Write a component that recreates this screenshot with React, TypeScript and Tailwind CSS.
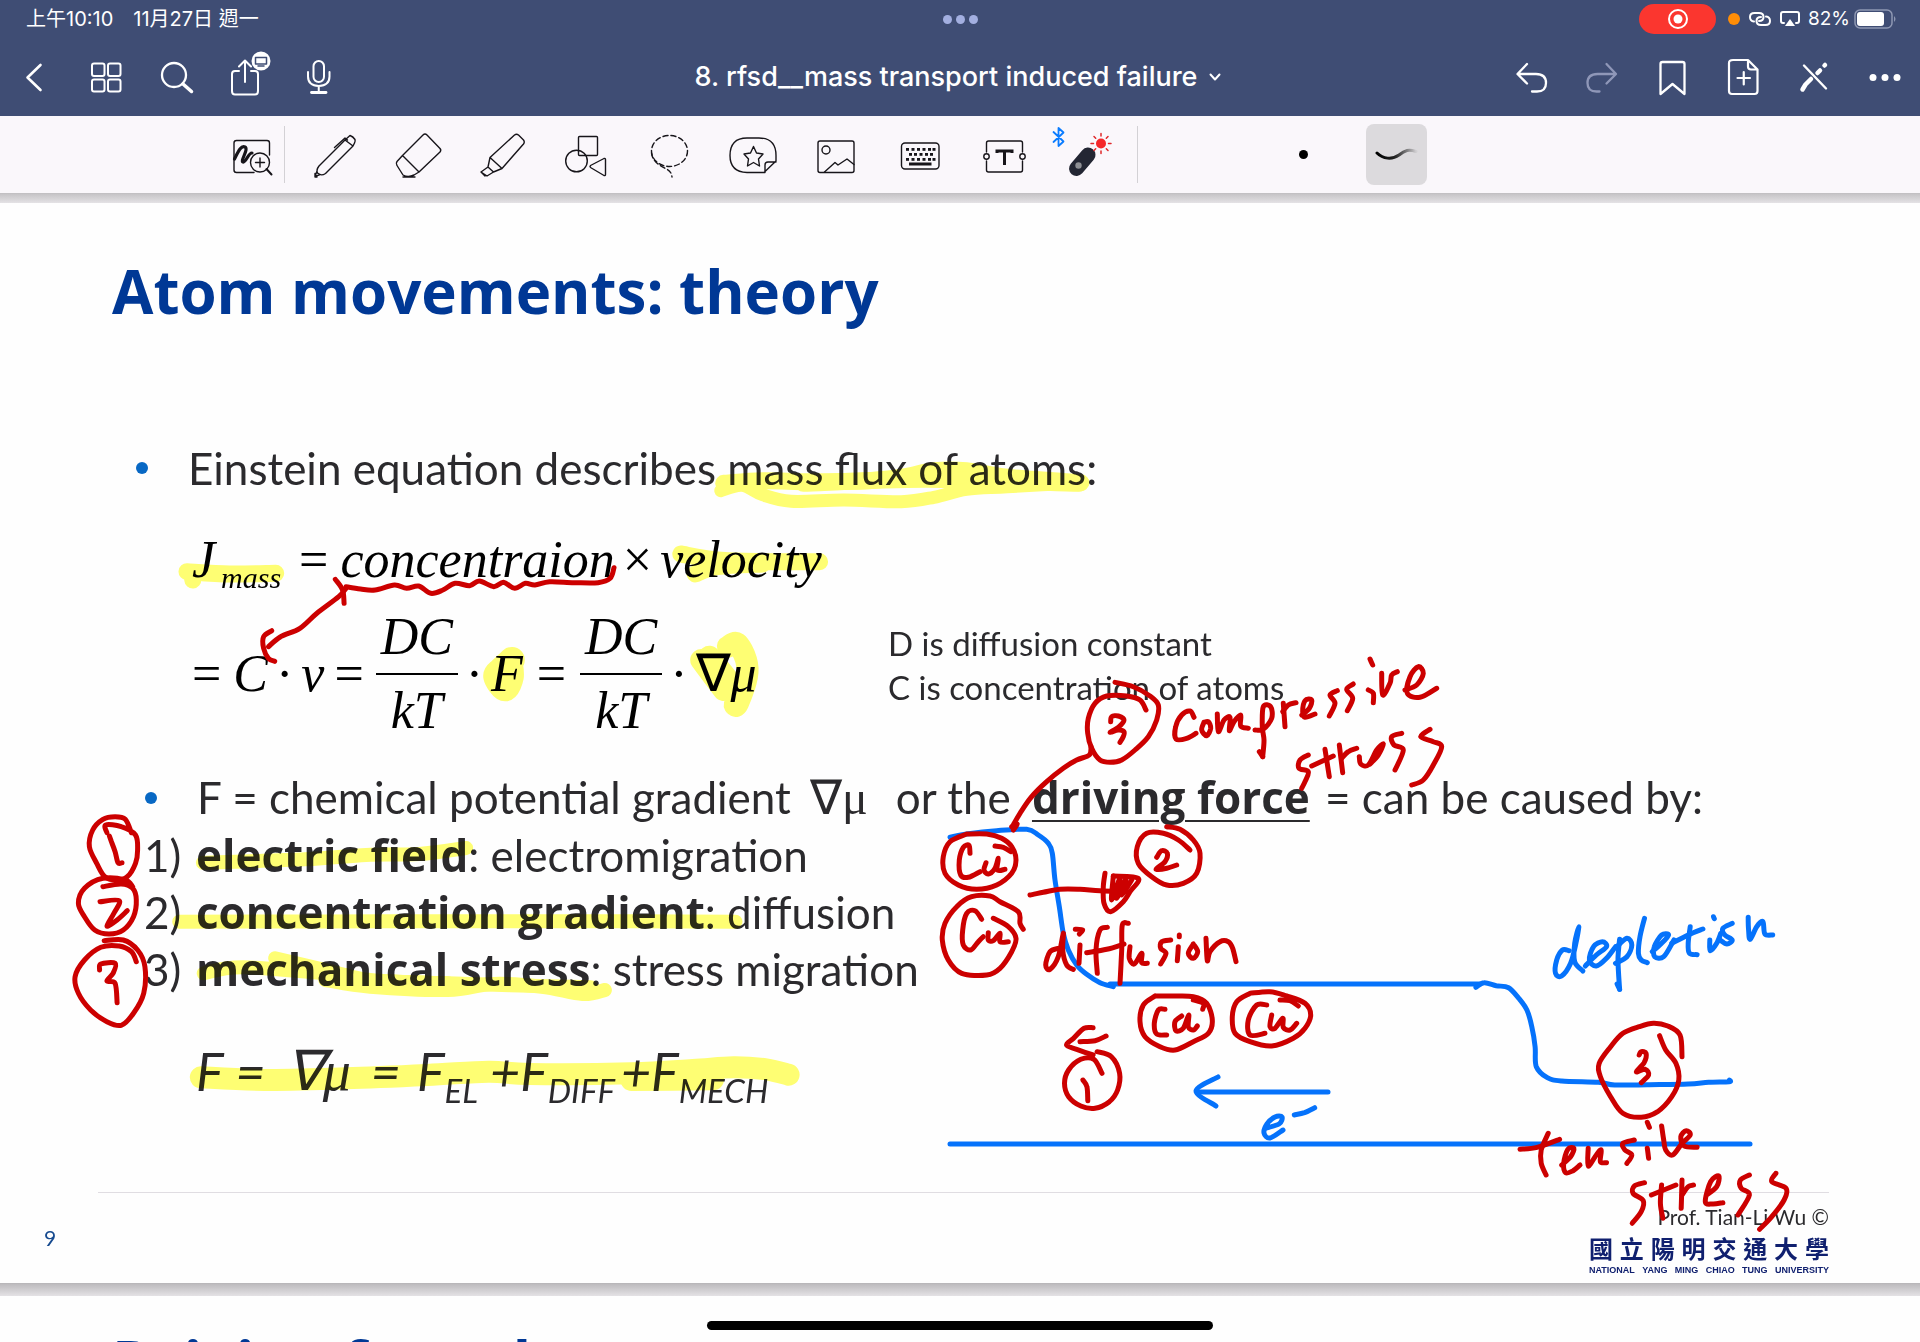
import React from "react";

/* ---------- ink helpers ---------- */

type Frame = { x: number; y: number; sx: number; sy: number };

// Turns "x,y x,y ..." samples into a smooth Catmull-Rom curve in slide units.
function smooth(samples: string, f: Frame): string {
  const p = samples.split(" ").map((s) => {
    const [a, b] = s.split(",").map(Number);
    return [f.x + a / f.sx, f.y + b / f.sy];
  });
  const r = (n: number) => n.toFixed(1);
  let d = `M${r(p[0][0])} ${r(p[0][1])}`;
  for (let i = 0; i < p.length - 1; i++) {
    const a = p[i - 1] ?? p[i];
    const b = p[i];
    const c = p[i + 1];
    const e = p[i + 2] ?? c;
    d += `C${r(b[0] + (c[0] - a[0]) / 6)} ${r(b[1] + (c[1] - a[1]) / 6)} ${r(c[0] - (e[0] - b[0]) / 6)} ${r(c[1] - (e[1] - b[1]) / 6)} ${r(c[0])} ${r(c[1])}`;
  }
  return d;
}

function Ink({ frame, strokes, color, width }: { frame: Frame; strokes: string[]; color: string; width: number }) {
  return (
    <g fill="none" stroke={color} strokeWidth={width} strokeLinecap="round" strokeLinejoin="round">
      {strokes.map((s, i) => (
        <path key={i} d={smooth(s, frame)} />
      ))}
    </g>
  );
}

const RED = "#cc0000";
const BLUE = "#0572fb";
const MARK = "#ffff73";

const PAGE: Frame = { x: 0, y: 0, sx: 1, sy: 1 };
const MIDDLE: Frame = { x: 900, y: 640, sx: 3, sy: 3 };
const UPPER: Frame = { x: 1000, y: 640, sx: 3, sy: 3 };
const LOWER: Frame = { x: 640, y: 780, sx: 2.45, sy: 3 };
const RIGHT: Frame = { x: 1280, y: 780, sx: 2.45, sy: 3 };
const LEFT: Frame = { x: 60, y: 780, sx: 2.45, sy: 3 };
const FORMULA: Frame = { x: 60, y: 520, sx: 2.063, sy: 3 };
const FLUX: Frame = { x: 640, y: 420, sx: 2.45, sy: 3 };

function Highlights() {
  return (
    <svg className="pointer-events-none absolute inset-0 h-full w-full mix-blend-multiply" viewBox="0 203 1920 1080" preserveAspectRatio="xMinYMin" aria-hidden="true">
      <Ink frame={FLUX} color={MARK} width={17} strokes={["205,190 300,182 420,185 560,182 650,170 720,152 800,152 900,172 1080,188", "400,190 700,178 1075,190", "135,462 190,440 300,432", "100,402 190,420 300,425 440,425"]} />
      <Ink frame={FLUX} color={MARK} width={13} strokes={["198,212 250,196 300,224 370,244 500,240 640,245 720,232 800,208 900,200 1085,188"]} />
      <Ink frame={FORMULA} color={MARK} width={17} strokes={["262,155 350,162 445,160", "273,160 274,180"]} />
      <Ink frame={FORMULA} color={MARK} width={26} strokes={["932,420 910,450 900,470 918,505 930,470 928,430"]} />
      <Ink frame={FLUX} color={MARK} width={22} strokes={["150,720 165,745 205,810", "170,710 210,770", "215,680 238,670 260,720 262,770 240,850 232,855"]} />
      <Ink frame={LEFT} color={MARK} width={14} strokes={["350,248 600,238 750,225 880,222 995,204", "292,425 800,424 1400,424 1655,425", "527,535 650,570 760,600 950,610", "352,580 450,562 700,585", "650,600 760,620 950,630 1060,612 1180,620 1280,642 1335,630", "700,600 950,610 1300,622"]} />
      <Ink frame={LEFT} color={MARK} width={22} strokes={["345,892 500,900 700,895 900,885 1050,875 1150,882 1400,880 1550,870 1650,862 1730,868 1785,884", "1400,900 1600,898"]} />
    </svg>
  );
}

function Annotations() {
  return (
    <svg className="pointer-events-none absolute inset-0 h-full w-full" viewBox="0 203 1920 1080" preserveAspectRatio="xMinYMin" role="img" aria-label="Pen annotations: compressive stress, diffusion, depletion, tensile stress, Cu atoms and electron flow">
      <Ink frame={MIDDLE} color={BLUE} width={5} strokes={["150,592 200,582 290,572 380,568 415,585 445,610 457,640 465,720 478,800 490,880 505,930 530,975 560,1003 600,1028 640,1040"]} />
      <Ink frame={PAGE} color={BLUE} width={5} strokes={["1110,984 1480,984", "950,1144 1750,1144", "1198,1092 1328,1092", "1218,1077 1196,1091 1216,1106", "1266,1128 1279,1124 1282,1117 1275,1117 1267,1124 1264,1133 1270,1138 1283,1130"]} />
      <Ink frame={RIGHT} color={BLUE} width={5} strokes={["480,622 500,608 530,617 560,623 585,655 605,690 617,740 625,800 628,860 655,893 690,903 780,907 820,915 900,914 1000,912 1050,907 1100,905 1101,900", "35,1005 60,998 85,983"]} />
      <Ink frame={RIGHT} color={BLUE} width={5} strokes={["708,512 692,510 678,540 675,580 690,588 712,550 725,490 732,440 722,490 722,545 742,573", "748,558 775,525 800,500 790,485 768,500 758,540 775,558 800,535 822,500", "832,478 828,540 832,628", "826,612 832,628", "825,500 850,475 862,495 850,530 822,550", "893,415 882,470 878,520 885,540 900,548", "912,515 935,490 952,465 935,465 917,500 918,530 940,530 965,480", "1005,440 1000,490 1003,520 1022,524", "960,490 1000,465 1036,447", "1053,480 1054,512 1070,490 1080,460", "1062,410 1064,416", "1108,430 1085,445 1090,465 1108,480 1095,492 1078,480", "1147,412 1148,450 1152,478 1168,440 1183,425 1188,462 1207,465"]} />

      <Ink frame={FORMULA} color={RED} width={5} strokes={["1143,143 1135,175 1110,188 1060,188 1010,185 980,195 960,190 938,205 915,187 895,200 865,183 845,197 815,190 790,210 765,220 740,198 715,205 690,195 650,210 620,207 590,200", "568,178 583,210 586,250", "590,205 575,230 530,280 495,325 455,350 430,380", "437,332 420,350 420,385 430,415 443,424"]} />

      <Ink frame={LEFT} color={RED} width={5} strokes={["115,158 112,135 150,140 185,165 190,210 185,250 165,290 140,300 110,290 90,250 72,200 80,150 105,118 135,110 160,118 175,158", "121,168 126,185 135,215 142,248 152,248", "105,320 150,312 178,325 187,360 180,410 155,450 120,462 85,450 60,410 45,370 60,325 105,295 160,300 178,320", "98,365 145,362 132,400 115,438 140,420 165,392", "108,482 155,480 190,510 208,560 205,640 180,700 150,736 115,725 75,690 45,640 37,590 60,540 100,502 145,498 175,515 187,545", "97,570 100,552 135,550 130,580 115,603 135,610 140,668"]} />

      <Ink frame={MIDDLE} color={RED} width={5} strokes={["645,127 700,140 750,168 775,195 770,240 745,290 705,330 665,360 630,367 600,360 575,325 563,280 565,235 585,190 620,168 680,168 720,180 738,210", "632,245 635,230 655,228 672,240 655,262 630,277 655,270 672,275 670,290 660,307", "573,320 568,345 530,360 490,385 440,425 395,470 360,520 340,555", "335,560 352,552 340,570", "200,582 150,605 130,650 135,700 175,735 230,748 290,735 335,700 348,660 335,620 305,595 260,582 200,582", "285,618 310,622 333,635", "210,640 207,616 190,622 178,660 182,705 205,712 240,695", "258,668 252,690 265,702 285,685 295,655 292,690 315,688", "370,868 360,850 355,815 300,785 270,768 215,770 170,800 135,850 127,900 145,960 185,1000 260,1005 300,985 335,935 348,895 325,860 280,835", "245,838 225,812 200,820 188,870 190,915 212,930 235,905 250,890", "265,878 265,900 280,902 300,880 300,905 325,905", "390,765 430,757 480,748 540,748 600,752 680,755", "615,700 610,740 612,790 632,815 670,785 690,755 715,715 640,708", "640,708 635,780 660,712 650,775 678,715 665,765 695,720 672,755", "800,560 840,568 880,600 900,640 890,700 850,730 800,735 755,710 715,670 712,620 740,580 790,580 835,600 870,630", "770,652 785,632 802,640 795,665 768,688 800,685 830,675"]} />
      <Ink frame={MIDDLE} color={RED} width={5} strokes={["475,925 450,935 437,975 450,988 475,950 490,880 488,930 500,975 520,988", "540,915 537,970", "526,868 548,870 538,882", "622,862 600,870 588,930 592,1000", "560,938 620,928 672,912", "685,850 667,855 665,930 660,1030", "690,920 688,955 703,972 725,940 725,968 742,970", "812,900 785,905 782,925 798,940 782,972", "835,920 832,962", "838,885 838,890", "880,912 865,940 880,955 893,935 880,912", "918,895 922,962 930,935 960,905 985,905 998,925 1008,965", "765,1068 730,1095 720,1145 735,1190 780,1220 825,1230 880,1205 925,1180 937,1140 920,1090 880,1070 820,1068 765,1068", "880,1080 910,1090 908,1108", "795,1108 775,1110 763,1150 770,1182 800,1185", "845,1128 825,1145 828,1172 850,1165 866,1125 865,1160 880,1170 892,1158", "1050,1060 1010,1085 997,1130 1005,1180 1050,1205 1115,1218 1180,1195 1215,1165 1232,1125 1215,1090 1160,1068 1110,1055 1050,1060", "1140,1080 1170,1082 1195,1098", "1100,1095 1070,1095 1045,1140 1050,1185 1095,1180", "1115,1125 1110,1160 1125,1165 1148,1135 1150,1162 1170,1170 1190,1150"]} />
      <Ink frame={LOWER} color={RED} width={5} strokes={["1110,743 1088,745 1062,775 1045,795 1070,808 1110,825", "1078,785 1115,782 1142,768", "1120,815 1155,830 1175,880 1170,930 1150,965 1115,985 1080,978 1050,950 1040,910 1050,870 1080,838 1112,838 1132,880", "1085,900 1095,920 1097,962"]} />
      <Ink frame={UPPER} color={RED} width={5} strokes={["582,232 570,213 545,225 527,260 528,297 560,295 588,280", "612,247 605,270 620,287 632,265 625,245 612,247", "652,222 655,275 672,240 690,232 688,272 702,245 722,225 722,258 745,265", "765,270 790,268 815,235 812,200 790,200 787,260 792,300 788,350", "778,335 788,350", "850,190 855,260", "848,215 865,195 888,188", "905,225 928,205 935,180 915,182 908,215 915,232 945,222", "1012,152 990,165 1005,190 988,228", "1060,132 1040,148 1058,175 1042,212", "1105,150 1120,160 1120,188", "1110,57 1118,75", "1145,100 1148,165 1170,130 1175,105 1192,95", "1215,150 1250,135 1270,100 1255,80 1230,110 1222,160 1260,172 1310,145", "925,345 900,360 897,385 925,395 915,425 905,445", "975,328 988,410", "935,378 1000,348", "1018,315 1028,398", "1025,355 1045,335 1070,325", "1078,350 1082,372 1105,375 1130,330 1150,312 1135,345 1110,372", "1205,280 1175,290 1182,315 1210,330 1185,390", "1290,268 1262,290 1300,305 1325,320 1300,375 1270,420 1235,435"]} />
      <Ink frame={RIGHT} color={RED} width={5} strokes={["930,767 945,810 970,850 977,900 960,950 925,995 885,1012 840,1000 810,950 785,890 782,850 810,800 840,760 880,740 915,730 950,738 980,765 985,830", "880,825 885,815 897,820 892,848 873,875 895,868 903,885 885,908", "588,1108 630,1102 685,1078", "657,1060 640,1110 640,1150 652,1185", "690,1155 712,1130 720,1105 705,1108 695,1150 700,1178 718,1172 735,1155", "755,1105 755,1158 775,1125 787,1110 785,1145 800,1148", "868,1080 840,1090 845,1110 862,1125 850,1150", "900,1105 903,1135", "900,1027 905,1042", "935,1038 940,1080 945,1110 962,1125 985,1090 1005,1065 995,1052 982,1070 990,1098 1022,1102", "893,1208 868,1218 865,1240 890,1262 885,1295 863,1330", "935,1215 932,1270 938,1315", "910,1245 970,1215", "985,1200 983,1285", "985,1245 1000,1220 1013,1215", "1045,1245 1070,1220 1075,1188 1055,1205 1042,1265 1060,1272 1085,1268", "1150,1185 1128,1200 1130,1225 1150,1245 1122,1305", "1215,1180 1205,1205 1240,1225 1235,1260 1205,1310 1175,1348"]} />
    </svg>
  );
}

/* ---------- toolbar drawings ---------- */

function Glyph({ children, sw = 2 }: { children: React.ReactNode; sw?: number }) {
  return (
    <svg className="h-12 w-12 overflow-visible" viewBox="0 0 48 48" fill="none" stroke="currentColor" strokeWidth={sw} strokeLinecap="round" strokeLinejoin="round" aria-hidden="true">
      {children}
    </svg>
  );
}

function ToolGlyph({ children }: { children: React.ReactNode }) {
  return (
    <svg className="h-14 w-12 overflow-visible" viewBox="0 0 48 56" fill="none" stroke="#17151a" strokeWidth={1.4} strokeLinecap="round" strokeLinejoin="round" aria-hidden="true">
      {children}
    </svg>
  );
}

const leftActions = [
  { label: "Back", icon: <Glyph sw={2.6}><path d="M28.500 12 15.500 24.500 28.500 37" /></Glyph> },
  {
    label: "Thumbnails",
    icon: <Glyph><rect x="9" y="10.500" width="12.500" height="12.500" rx="2" /><rect x="25" y="10.500" width="12.500" height="12.500" rx="2" /><rect x="9" y="26.500" width="12.500" height="12" rx="2" /><rect x="25" y="26.500" width="12.500" height="12" rx="2" /></Glyph>,
  },
  { label: "Search", icon: <Glyph sw={2.3}><circle cx="20" cy="22" r="12" /><path d="m29 31 8.500 7.500" strokeWidth="3.500" /></Glyph> },
  {
    label: "Share",
    icon: (
      <Glyph>
        <path d="M14 18h-4q-3 0-3 3v17q0 3.500 3 3.500h20q3 0 3-3.500V21q0-3-3-3h-4M20 29V8M14 13.500 20 7.500l6 6" />
        <circle cx="36" cy="8" r="9.500" fill="#fff" stroke="none" />
        <path d="M30.500 4.500h11V11h-11zM33 13h6" stroke="#3f4d74" strokeWidth="1.500" />
      </Glyph>
    ),
  },
  {
    label: "Record audio",
    icon: <Glyph><rect x="17.500" y="8" width="10.500" height="21" rx="5.250" /><path d="M12 19v4.500q0 9 10.750 9.500Q33.500 32.500 33.500 23.500V19M22.750 33v6" /><path d="M15.500 39.500H30" strokeWidth="2.800" /></Glyph>,
  },
];

const rightActions = [
  { label: "Undo", icon: <Glyph sw={2.3}><path d="M21 11 11.500 21 21 30.500M12 21h18q10 0 10 9 0 8.500-9 8.500h-5" /></Glyph> },
  { label: "Redo", faded: true, icon: <Glyph sw={2.3}><path d="m29.500 11 9.500 10-9.500 9.500M38.500 21h-18q-10 0-10 9 0 8.500 9 8.500h3" /></Glyph> },
  { label: "Bookmark", icon: <Glyph sw={2.3}><path d="M12.500 11q0-2 2-2h20q2 0 2 2v30L24.500 31l-12 10z" /></Glyph> },
  { label: "Add page", icon: <Glyph sw={2.2}><path d="M14 7h15l9.500 9.500V38q0 3-3 3H13q-3 0-3-3V10q0-3 4-3zM29 7v6.500q0 3 3 3h6.500M18.500 25H31M24.750 19v12.500" /></Glyph> },
  {
    label: "Read only",
    icon: <Glyph><path d="M14 12.500 36 35.500" strokeWidth="2.400" /><path d="m12.500 36.500 3-5L21 26" strokeWidth="4.500" /><path d="m27.500 20 2.500-2.500M34.500 12.500l.5-.5" strokeWidth="4.500" /></Glyph>,
  },
  { label: "More", icon: <Glyph><g fill="currentColor" stroke="none"><circle cx="12" cy="24.500" r="3.500" /><circle cx="24" cy="24.500" r="3.500" /><circle cx="36" cy="24.500" r="3.500" /></g></Glyph> },
];

const keyRows = [
  { y: 21, xs: [10, 15.5, 21, 26.5, 32, 36.5] },
  { y: 26, xs: [13, 18, 23.5, 29, 34] },
  { y: 31, xs: [10, 15.5, 21, 26.5, 32, 36.5] },
];

const tools = [
  { label: "Pen", icon: <ToolGlyph><path d="M34 13 8 39q-3 4-1.500 7 3.500 3.500 8 .5L42 19zM34 13l5-4.500q3 1 5 4 .5 2-.5 3.500L42 19M23.500 20.500 34 11l2.500 2M6 44l-2 5.500 5-2M4 46.500V50h2" /></ToolGlyph> },
  { label: "Eraser", icon: <ToolGlyph><path d="M29 8q2-2 4 0l13 13.500q1.500 1.500 0 3.500L25 45 8.500 28.500zM8.500 28.500 3 34.500q-1.500 2 0 4l6 9.500q5 3 11 0l5-3M9 50h12" /></ToolGlyph> },
  { label: "Highlighter", icon: <ToolGlyph><path d="M36.500 8q2-1.500 4 0l5 5q1.500 2 0 4L24 41.500 12 30.500zM12 30.500 10 40l5.500 5L24 41.500M10 40l-7 5 6 4 6.500-4M3 45l4 4" /></ToolGlyph> },
  { label: "Shapes", icon: <ToolGlyph><rect x="16.500" y="9.500" width="19" height="19" rx="1" /><circle cx="14.500" cy="34" r="10.800" /><path d="M28.500 38.500q-1 1 0 2L42 48.500q1.500.5 1.500-1v-15q0-1.500-1.500-1z" /></ToolGlyph> },
  { label: "Lasso", icon: <ToolGlyph><g strokeDasharray="5 3"><ellipse cx="24.500" cy="24" rx="18" ry="15.500" /><path d="M6.500 26c1 9 9 13 15 16 4 2 5 4.500 5.500 8" /></g></ToolGlyph> },
  { label: "Elements", icon: <ToolGlyph><path d="M35 45.500H18Q1 45 1 28.500 1 11 18 11h12q17 0 17 17.500V34zM47 35h-8q-3 0-3 3v7.500" /><path d="m24.500 19.500 3 6.500 6.500 1-4.500 5 1 7-6-3.500-6 3.500 1-7-4.500-5 6.500-1z" /></ToolGlyph> },
  { label: "Image", icon: <ToolGlyph><rect x="6" y="14" width="36" height="31.500" rx="2" /><circle cx="14" cy="23" r="4" /><path d="M12.500 45 23 35.500l3 2.500 9-6 7 5.500" /></ToolGlyph> },
  {
    label: "Keyboard",
    icon: (
      <ToolGlyph>
        <rect x="5.500" y="16" width="37.500" height="26" rx="3.500" />
        <g fill="#17151a" stroke="none">
          {keyRows.map((r) => r.xs.map((x) => <rect key={`${x}-${r.y}`} x={x} y={r.y} width="3" height="2.800" />))}
          <rect x="13" y="35.500" width="22.500" height="3" />
        </g>
      </ToolGlyph>
    ),
  },
  { label: "Text box", icon: <ToolGlyph><path d="M6.500 25v-9q0-2 2-2h32q2 0 2 2v9M6.500 34v9q0 2 2 2h32q2 0 2-2v-9" /><circle cx="6.500" cy="29.500" r="2.700" /><circle cx="42.500" cy="29.500" r="2.700" /><path d="M17 26v-2h15v2M24.500 24v14" strokeWidth="3" strokeLinecap="butt" strokeLinejoin="miter" /></ToolGlyph> },
  {
    label: "Laser pointer",
    icon: (
      <ToolGlyph>
        <path d="m-9.500 5 10 9.500-5 4.500V1l5 4.500-10 9.500" stroke="#0a7cff" strokeWidth="1.800" />
        <path d="M13.500 41.500 25 28" stroke="#232633" strokeWidth="15" />
        <circle cx="15.500" cy="38.500" r="3.200" fill="#8d8f94" stroke="none" />
        <circle cx="38" cy="16.500" r="5" fill="#f5282a" stroke="none" />
        <path d="M38 6.500v2.500M38 24v2.500M28 16.500h2.500M45.500 16.500H48M31 9.500l1.700 1.700M43.300 21.800l1.700 1.700M45 9.500l-1.700 1.700M32.700 21.800 31 23.500" stroke="#e0282a" strokeWidth="1.500" />
      </ToolGlyph>
    ),
  },
];

/* ---------- page parts ---------- */

function StatusBar() {
  return (
    <div className="grid h-[38px] grid-cols-[1fr_auto_1fr] items-center text-[20px] leading-6">
      <div className="flex gap-5 pl-[26px]">
        <span>上午10:10</span>
        <span>11月27日 週一</span>
      </div>
      <button type="button" aria-label="Window controls" className="flex gap-1">
        <span className="size-[9px] rounded-full bg-[#a3afe0]" />
        <span className="size-[9px] rounded-full bg-[#a3afe0]" />
        <span className="size-[9px] rounded-full bg-[#a3afe0]" />
      </button>
      <div className="flex items-center justify-end pr-[23px]">
        <button type="button" aria-label="Screen recording" className="mr-3 flex h-[30px] w-[77px] items-center justify-center rounded-full bg-[#fb362f]">
          <svg className="size-5" viewBox="0 0 20 20" aria-hidden="true"><circle cx="10" cy="10" r="9" fill="none" stroke="#fff" strokeWidth="2" /><circle cx="10" cy="10" r="4.500" fill="#fff" /></svg>
        </button>
        <span className="mr-2 size-3 rounded-full bg-[#ff8d06]" />
        <svg className="mr-2 h-4 w-6" viewBox="0 0 24 16" fill="none" stroke="#fff" strokeWidth="2" strokeLinecap="round" aria-hidden="true"><path d="M6 10.500Q2 10 2 6t4.500-4H11q4.500 0 4.500 4T11 10M18 5.500q4 .5 4 4.500t-4.500 4H13q-4.500 0-4.500-4T13 6" /></svg>
        <svg className="mr-2 h-4 w-5" viewBox="0 0 20 16" fill="none" stroke="#fff" strokeWidth="2" strokeLinecap="round" aria-hidden="true"><path d="M4 12H3q-2 0-2-2V3q0-2 2-2h14q2 0 2 2v7q0 2-2 2h-1" /><path d="m10 8 5 7H5z" fill="#fff" stroke="none" /></svg>
        <span className="text-[19px]">82%</span>
        <svg className="ml-1 h-5 w-[43px]" viewBox="0 0 43 20" aria-hidden="true"><rect x="1" y="1" width="37" height="18" rx="5" fill="none" stroke="#8f98b3" strokeWidth="1.500" /><rect x="3" y="3" width="27" height="14" rx="3" fill="#fff" /><path d="M40 7q3 3 0 6z" fill="#8f98b3" /></svg>
      </div>
    </div>
  );
}

function NavBar() {
  return (
    <div className="grid h-[78px] grid-cols-[1fr_auto_1fr] items-center">
      <div className="flex">
        {leftActions.map((a) => (
          <button key={a.label} type="button" aria-label={a.label} className="flex w-[71px] justify-center">{a.icon}</button>
        ))}
      </div>
      <button type="button" className="flex items-center gap-3 pr-1 text-[27px] leading-8 font-medium">
        8. rfsd__mass transport induced failure
        <svg className="h-2 w-3" viewBox="0 0 12 8" fill="none" stroke="currentColor" strokeWidth="2" strokeLinecap="round" strokeLinejoin="round" aria-hidden="true"><path d="m1.500 1.500 4.500 5 4.500-5" /></svg>
      </button>
      <div className="flex justify-end">
        {rightActions.map((a) => (
          <button key={a.label} type="button" aria-label={a.label} className={a.faded ? "flex w-[71px] justify-center text-[#8f97b8]" : "flex w-[71px] justify-center"}>{a.icon}</button>
        ))}
      </div>
    </div>
  );
}

function ToolBar() {
  return (
    <div className="relative z-10 flex h-[78px] items-center border-b border-[#c2c0c3] bg-[#faf7fb] pl-[220px]">
      <button type="button" aria-label="Zoom window" className="flex w-16 justify-center">
        <ToolGlyph>
          <path d="M41.500 28V16q0-2.500-2.500-2.500H8.500q-2.500 0-2.500 2.500v27q0 2.500 2.500 2.500H26" />
          <circle cx="32" cy="35.500" r="9.500" /><path d="m38.500 42 5 5.500" strokeWidth="2" /><path d="M27.500 35.500h9M32 31v9" />
          <path d="M6.500 32C10 25 13 18 17 20s-5 14-2 15 5-9 9-9" strokeWidth="3.200" />
        </ToolGlyph>
      </button>
      <span className="h-[57px] w-px bg-[#d3d1d5]" />
      <div className="ml-2 grid w-[836px] grid-cols-10">
        {tools.map((t) => (
          <button key={t.label} type="button" aria-label={t.label} className="flex justify-center">{t.icon}</button>
        ))}
      </div>
      <span className="ml-2 h-[57px] w-px bg-[#d3d1d5]" />
      <button type="button" aria-label="Dot laser" className="ml-[135px] flex size-[61px] items-center justify-center">
        <span className="size-[9px] rounded-full bg-black" />
      </button>
      <button type="button" aria-label="Trail laser" aria-pressed="true" className="ml-8 flex size-[61px] items-center justify-center rounded-lg bg-[#dcdadd]">
        <svg className="h-4 w-[44px]" viewBox="0 0 44 16" fill="none" strokeLinecap="round" aria-hidden="true">
          <defs><linearGradient id="trail"><stop offset="0" stopColor="#000" /><stop offset=".45" stopColor="#222" /><stop offset="1" stopColor="#000" stopOpacity=".05" /></linearGradient></defs>
          <path d="M2 6C8 12 17 13 24 8c6-5 10-6 17-3.500" stroke="url(#trail)" strokeWidth="3" />
        </svg>
      </button>
    </div>
  );
}

function Fraction() {
  return (
    <span className="flex w-[82px] flex-col text-center leading-[52px]">
      <span className="border-b-2 border-black pb-2.5">DC</span>
      <span className="pt-2.5">kT</span>
    </span>
  );
}

const causes = [
  { n: "1)", term: "electric field", effect: "electromigration" },
  { n: "2)", term: "concentration gradient", effect: "diffusion" },
  { n: "3)", term: "mechanical stress", effect: "stress migration" },
];

function Slide() {
  return (
    <article className="relative isolate border-b border-[#b9b7ba] bg-[#fefefe] font-['Lato',sans-serif] text-[#2b2a2d]">
      <h1 className="pt-[52px] pl-28 font-['Open_Sans',sans-serif] text-[60px] leading-[72px] font-bold text-[#003895]">Atom movements: theory</h1>

      <p className="mt-[113px] flex items-center pl-[136px] text-[44px] leading-[56px]">
        <span className="mr-10 size-3 rounded-full bg-[#0868c4]" />
        Einstein equation describes mass flux of atoms:
      </p>

      <p className="mt-[34px] flex pl-[192px] font-['Liberation_Serif',serif] text-[52px] leading-[60px] text-black italic">
        <span className="mr-[18px] flex gap-1.5">J<sub className="top-[18px] bottom-0 self-center text-[30px] leading-none">mass</sub></span>
        <span className="mr-3 not-italic">=</span>
        <span className="mr-2">concentraion</span>
        <span className="mr-2 not-italic">×</span>
        <span>velocity</span>
      </p>

      <div className="mt-[21px] grid grid-cols-[888px_1fr]">
        <p className="flex items-center pl-[192px] font-['Liberation_Serif',serif] text-[52px] leading-[60px] text-black italic">
          <span className="mr-3 not-italic">=</span>
          <span className="mr-2">C</span>
          <span className="mr-2 not-italic">·</span>
          <span className="mr-2.5">v</span>
          <span className="mr-3 not-italic">=</span>
          <Fraction />
          <span className="mx-2 not-italic">·</span>
          <span className="mr-3.5">F</span>
          <span className="mr-3.5 not-italic">=</span>
          <Fraction />
          <span className="mx-2 not-italic">·</span>
          <span className="not-italic">∇</span>
          <span>μ</span>
        </p>
        <p className="mt-2.5 text-[33px] leading-[44px]">
          D is diffusion constant
          <br />
          C is concentration of atoms
        </p>
      </div>

      <p className="mt-8 flex items-center pl-[145px] text-[44px] leading-[57px] whitespace-pre">
        <span className="mr-10 size-3 rounded-full bg-[#0868c4]" />
        <span>F = chemical potential gradient </span>
        <span className="mr-7 ml-2 font-['Liberation_Serif',serif] text-[48px]">∇μ</span>
        <span className="mr-2.5">or the </span>
        <span className="mr-1 font-['Open_Sans',sans-serif] font-bold underline decoration-2 underline-offset-[6px]">driving force</span>
        <span> = can be caused by:</span>
      </p>
      <ol className="mt-px pl-[144px] text-[44px] leading-[57px]">
        {causes.map((c) => (
          <li key={c.n} className="flex">
            <span className="w-[52px]">{c.n}</span>
            <span className="font-['Open_Sans',sans-serif] font-bold">{c.term}</span>
            <span>: {c.effect}</span>
          </li>
        ))}
      </ol>

      <p className="mt-[38px] flex pl-[196px] text-[52px] leading-[70px] italic">
        <span className="mr-3">F</span>
        <span className="mr-5">=</span>
        <span className="mr-5 font-['Liberation_Serif',serif] text-[56px]">∇μ</span>
        <span className="mr-4">=</span>
        <span className="mr-3">F<sub className="top-3 bottom-0 text-[33px] leading-none">EL</sub></span>
        <span className="mr-1.5">+F<sub className="top-3 bottom-0 text-[33px] leading-none">DIFF</sub></span>
        <span>+F<sub className="top-3 bottom-0 text-[33px] leading-none">MECH</sub></span>
      </p>

      <hr className="mt-[86px] mr-[91px] ml-[98px] border-[#e0dde2]" />
      <footer className="flex h-[90px] items-start justify-between pr-[91px] pl-11">
        <span className="mt-[33px] text-[21px] leading-6 text-[#164a8f]">9</span>
        <div className="w-[240px] pt-3">
          <p className="text-right text-[21px] leading-6">Prof. Tian-Li Wu ©</p>
          <p className="mt-[5px] flex justify-between font-['Noto_Sans_CJK_TC',sans-serif] text-2xl leading-7 font-bold text-[#10206f]" aria-label="國立陽明交通大學">
            {"國立陽明交通大學".split("").map((c) => (
              <span key={c}>{c}</span>
            ))}
          </p>
          <p className="mt-0.5 flex justify-between font-['Liberation_Sans',sans-serif] text-[9px] leading-3 font-bold text-[#10206f]">
            <span>NATIONAL</span><span>YANG</span><span>MING</span><span>CHIAO</span><span>TUNG</span><span>UNIVERSITY</span>
          </p>
        </div>
      </footer>
      <Highlights />
      <Annotations />
    </article>
  );
}

export default function App() {
  return (
    <div className="relative flex h-screen flex-col overflow-hidden bg-[#e4e2e5] font-['Inter','Noto_Sans_CJK_TC',sans-serif]">
      <header className="shrink-0 bg-[#3f4d74] text-white">
        <StatusBar />
        <NavBar />
        <ToolBar />
      </header>
      <main className="shrink-0">
        <div className="h-[9px] bg-gradient-to-b from-[#c6c4c7] to-[#e4e2e5]" />
        <Slide />
        <div className="h-3 bg-gradient-to-b from-[#bdbbbe] to-[#e4e2e5]" />
        <section className="bg-[#fefefe] font-['Open_Sans',sans-serif]">
          <h2 className="pt-[30px] pl-28 text-[60px] leading-[72px] font-bold text-[#003895]">Driving force l</h2>
        </section>
      </main>
      <div className="absolute bottom-3 left-1/2 h-[9px] w-[506px] -translate-x-1/2 rounded-full bg-black" />
    </div>
  );
}
